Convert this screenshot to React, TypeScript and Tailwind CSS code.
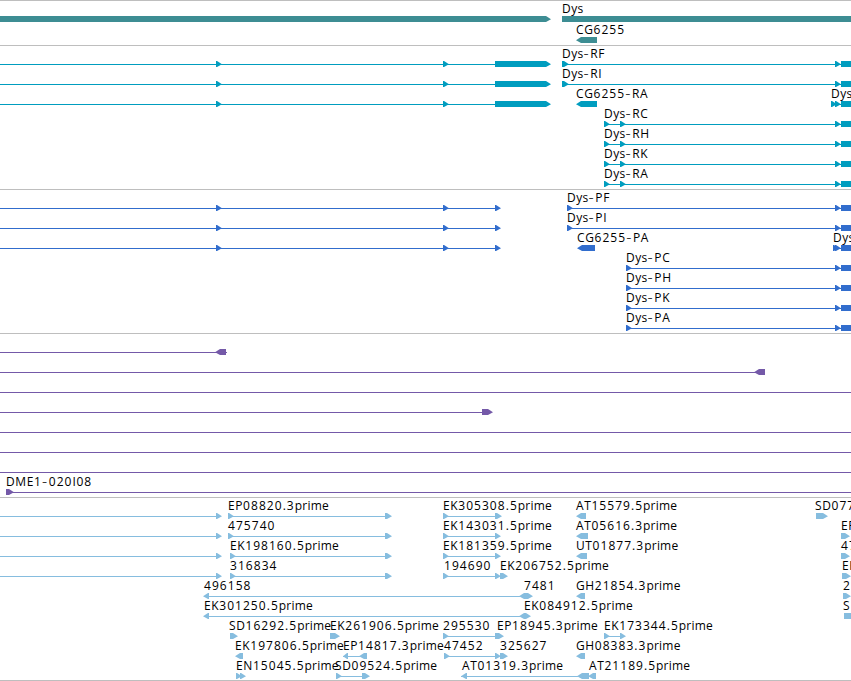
type Dir = "right" | "left" | "both" | "block";
type Shape = [from: number, to: number, dir: Dir];
type Row = {
  labels?: [x: number, text: string][];
  lines?: [from: number, to: number][];
  shapes?: Shape[];
};
type Track = { name: string; color: string; rowHeight: number; rows: Row[] };

const WIDTH = 851;

const arrows = (...starts: number[]): Shape[] =>
  starts.map((x) => [x, x + 6, "right"]);

const lastExon: Shape[] = [...arrows(835), [841, WIDTH, "block"]];

const leftTranscript: Shape[] = [...arrows(216, 443), [495, 551, "right"]];
const leftProtein: Shape[] = arrows(216, 443, 495);

const shortTranscript = (text: string): Row => ({
  labels: [[604, text]],
  lines: [[604, 841]],
  shapes: [...arrows(604, 620), ...lastExon],
});

const shortProtein = (text: string): Row => ({
  labels: [[626, text]],
  lines: [[626, 841]],
  shapes: [...arrows(626), ...lastExon],
});

const tracks: Track[] = [
  {
    name: "genes",
    color: "#3d8d93",
    rowHeight: 21,
    rows: [
      { labels: [[562, "Dys"]], shapes: [[0, 551, "right"], [562, WIDTH, "block"]] },
      { labels: [[576, "CG6255"]], shapes: [[576, 597, "left"]] },
    ],
  },
  {
    name: "transcripts",
    color: "#009dbf",
    rowHeight: 20,
    rows: [
      {
        labels: [[562, "Dys-RF"]],
        lines: [[0, 495], [562, 841]],
        shapes: [...leftTranscript, [562, 569, "right"], ...lastExon],
      },
      {
        labels: [[562, "Dys-RI"]],
        lines: [[0, 495], [562, 841]],
        shapes: [...leftTranscript, [562, 569, "right"], ...lastExon],
      },
      {
        labels: [[576, "CG6255-RA"], [831, "Dys"]],
        lines: [[0, 495], [831, 841]],
        shapes: [...leftTranscript, [576, 597, "left"], ...arrows(831), ...lastExon],
      },
      shortTranscript("Dys-RC"),
      shortTranscript("Dys-RH"),
      shortTranscript("Dys-RK"),
      shortTranscript("Dys-RA"),
    ],
  },
  {
    name: "proteins",
    color: "#316dcd",
    rowHeight: 20,
    rows: [
      {
        labels: [[567, "Dys-PF"]],
        lines: [[0, 496], [567, 841]],
        shapes: [...leftProtein, ...arrows(567), ...lastExon],
      },
      {
        labels: [[567, "Dys-PI"]],
        lines: [[0, 496], [567, 841]],
        shapes: [...leftProtein, ...arrows(567), ...lastExon],
      },
      {
        labels: [[577, "CG6255-PA"], [833, "Dys"]],
        lines: [[0, 496], [833, 841]],
        shapes: [...leftProtein, [577, 595, "left"], ...arrows(833), ...lastExon],
      },
      shortProtein("Dys-PC"),
      shortProtein("Dys-PH"),
      shortProtein("Dys-PK"),
      shortProtein("Dys-PA"),
    ],
  },
  {
    name: "clones",
    color: "#7459a8",
    rowHeight: 20,
    rows: [
      { lines: [[0, 227]], shapes: [[215, 226, "left"]] },
      { lines: [[0, 765]], shapes: [[754, 765, "left"]] },
      { lines: [[0, WIDTH]] },
      { lines: [[0, 491]], shapes: [[482, 493, "right"]] },
      { lines: [[0, WIDTH]] },
      { lines: [[0, WIDTH]] },
      { lines: [[0, WIDTH]] },
      {
        labels: [[6, "DME1-020I08"]],
        lines: [[6, WIDTH]],
        shapes: [[6, 14, "right"]],
      },
    ],
  },
  {
    name: "insertions",
    color: "#86bddf",
    rowHeight: 20,
    rows: [
      {
        labels: [
          [228, "EP08820.3prime"],
          [443, "EK305308.5prime"],
          [576, "AT15579.5prime"],
          [815, "SD077"],
        ],
        lines: [[0, 217], [228, 386], [443, 496]],
        shapes: [
          ...arrows(216, 228, 443),
          [385, 392, "right"],
          [495, 502, "right"],
          [576, 586, "left"],
          [816, 828, "right"],
        ],
      },
      {
        labels: [
          [228, "475740"],
          [443, "EK143031.5prime"],
          [576, "AT05616.3prime"],
          [841, "EP"],
        ],
        lines: [[0, 217], [228, 386], [443, 496]],
        shapes: [
          ...arrows(216, 228, 443, 495),
          [385, 392, "right"],
          [576, 588, "left"],
          [841, 850, "right"],
        ],
      },
      {
        labels: [
          [230, "EK198160.5prime"],
          [443, "EK181359.5prime"],
          [576, "UT01877.3prime"],
          [841, "47"],
        ],
        lines: [[0, 217], [230, 386], [443, 496]],
        shapes: [
          ...arrows(216, 230, 443, 495),
          [385, 392, "right"],
          [576, 587, "left"],
          [841, 850, "right"],
        ],
      },
      {
        labels: [
          [230, "316834"],
          [444, "194690"],
          [500, "EK206752.5prime"],
          [842, "EK"],
        ],
        lines: [[0, 217], [230, 386], [443, 496]],
        shapes: [
          ...arrows(216, 230, 443, 495),
          [385, 392, "right"],
          [500, 508, "right"],
          [842, 851, "right"],
        ],
      },
      {
        labels: [
          [204, "496158"],
          [524, "7481"],
          [576, "GH21854.3prime"],
          [843, "2"],
        ],
        lines: [[204, 520]],
        shapes: [
          [203, 209, "left"],
          [519, 533, "both"],
          [576, 585, "left"],
          [843, 851, "right"],
        ],
      },
      {
        labels: [
          [204, "EK301250.5prime"],
          [524, "EK084912.5prime"],
          [843, "S"],
        ],
        lines: [[204, 520]],
        shapes: [
          [203, 209, "left"],
          [519, 531, "both"],
          [844, 857, "right"],
        ],
      },
      {
        labels: [
          [229, "SD16292.5prime"],
          [330, "EK261906.5prime"],
          [443, "295530"],
          [497, "EP18945.3prime"],
          [604, "EK173344.5prime"],
        ],
        lines: [[443, 496], [604, 621]],
        shapes: [
          [230, 238, "right"],
          [330, 340, "right"],
          ...arrows(443),
          [495, 504, "right"],
          ...arrows(604, 620),
        ],
      },
      {
        labels: [
          [235, "EK197806.5prime"],
          [343, "EP14817.3prime"],
          [444, "47452"],
          [500, "325627"],
          [576, "GH08383.3prime"],
        ],
        lines: [[343, 360], [444, 496]],
        shapes: [
          [235, 243, "left"],
          [343, 348, "left"],
          [359, 367, "left"],
          ...arrows(444, 495),
          [500, 508, "right"],
          [576, 585, "left"],
        ],
      },
      {
        labels: [
          [236, "EN15045.5prime"],
          [335, "SD09524.5prime"],
          [462, "AT01319.3prime"],
          [589, "AT21189.5prime"],
        ],
        lines: [[336, 363], [461, 578]],
        shapes: [
          ...arrows(236, 240, 336),
          [362, 370, "right"],
          [461, 467, "left"],
          [577, 589, "left"],
          [588, 596, "left"],
        ],
      },
    ],
  },
];

// Glyphs are six pixels tall, with the tip on the middle line
function shapePath([from, to, dir]: Shape, top: number) {
  const tip = Math.min(6, to - from);
  const mid = top + 3.2;
  const bottom = top + 6;
  if (dir === "right") {
    return `M${from} ${top}H${to - tip + 1}L${to} ${mid}L${to - tip + 1} ${bottom}H${from}Z`;
  }
  if (dir === "left") {
    return `M${to} ${top}H${from + tip - 1}L${from} ${mid}L${from + tip - 1} ${bottom}H${to}Z`;
  }
  if (dir === "both") {
    return `M${from} ${mid}L${from + 5} ${top}H${to - 5}L${to} ${mid}L${to - 5} ${bottom}H${from + 5}Z`;
  }
  return `M${from} ${top}H${to}V${bottom}H${from}Z`;
}

// digits and dashes are set wider than the letters around them
function partClass(part: string) {
  if (part === "-") return "text-[16px] font-light tracking-[1.7px]";
  if (/[0-9]/.test(part)) return "tracking-[1.05px]";
  if (/[A-Z]/.test(part)) return "tracking-[0.6px]";
  return "tracking-[0.2px]";
}

function Label({ x, y, text }: { x: number; y: number; text: string }) {
  const parts = text.match(/[0-9.]+|-|[A-Z]+|[a-z]+/g) ?? [];
  return (
    <text x={x} y={y} className="fill-black text-[12px] [font-kerning:none]">
      {parts.map((part, i) => (
        <tspan
          key={i}
          dy={part === "-" ? 1 : parts[i - 1] === "-" ? -1 : 0}
          className={partClass(part)}
        >
          {part}
        </tspan>
      ))}
    </text>
  );
}

function TrackRow({ row, color, height }: { row: Row; color: string; height: number }) {
  const top = 14;
  return (
    <svg width={WIDTH} height={height} className="block shrink-0 overflow-visible">
      <g fill={color} shapeRendering="crispEdges">
        {row.lines?.map(([from, to], i) => (
          <rect key={i} x={from} y={top + 3} width={to - from} height={1} />
        ))}
      </g>
      <g fill={color}>
        {row.shapes?.map((shape, i) => (
          <path key={i} d={shapePath(shape, top)} />
        ))}
      </g>
      {row.labels?.map(([x, text]) => (
        <Label key={x} x={x} y={11} text={text} />
      ))}
    </svg>
  );
}

export default function App() {
  return (
    <main className="flex h-[681px] w-[851px] flex-col overflow-hidden border-b border-[#bebebe] bg-white font-['Open_Sans','Noto_Sans',sans-serif]">
      {tracks.map((track) => (
        <section
          key={track.name}
          aria-label={track.name}
          className="flex shrink-0 flex-col border-t border-[#bebebe] pt-px pb-0.5 last:pb-px first:pb-px"
        >
          {track.rows.map((row, i) => (
            <TrackRow key={i} row={row} color={track.color} height={track.rowHeight} />
          ))}
        </section>
      ))}
    </main>
  );
}
